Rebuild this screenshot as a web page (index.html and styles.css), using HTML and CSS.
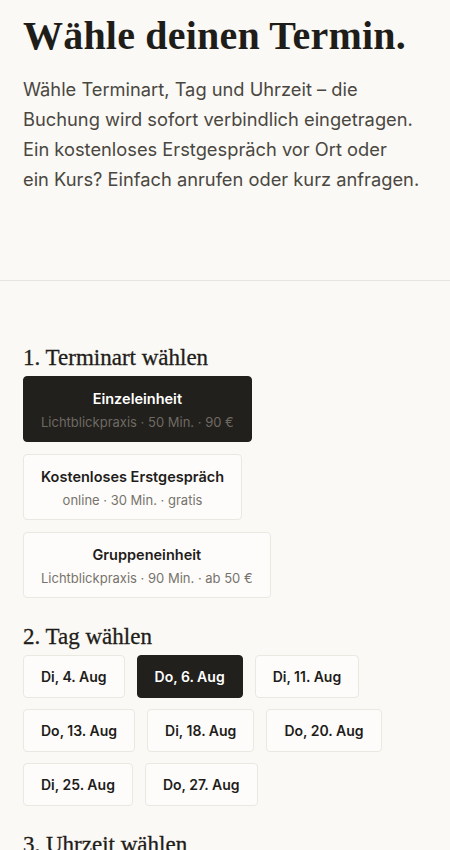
FILE: index.html
```html
<!DOCTYPE html>
<html lang="de">
<head>
<meta charset="utf-8">
<link rel="stylesheet" href="styles.css">
</head>
<body>
<header class="intro">
  <h1 class="title">Wähle deinen Termin.</h1>
  <p class="lead">Wähle Terminart, Tag und Uhrzeit – die<br>Buchung wird sofort verbindlich eingetragen.<br>Ein kostenloses Erstgespräch vor Ort oder<br>ein Kurs? Einfach anrufen oder kurz anfragen.</p>
</header>
<main class="booking">
  <section class="step">
    <h2 class="step-title">1. Terminart wählen</h2>
    <div class="types">
      <button class="type active"><span class="type-name">Einzeleinheit</span><span class="type-meta">Lichtblickpraxis · 50 Min. · 90 €</span></button>
      <button class="type"><span class="type-name">Kostenloses Erstgespräch</span><span class="type-meta">online · 30 Min. · gratis</span></button>
      <button class="type"><span class="type-name">Gruppeneinheit</span><span class="type-meta">Lichtblickpraxis · 90 Min. · ab 50 €</span></button>
    </div>
  </section>
  <section class="step">
    <h2 class="step-title">2. Tag wählen</h2>
    <div class="days">
      <button class="day">Di, 4. Aug</button>
      <button class="day active">Do, 6. Aug</button>
      <button class="day">Di, 11. Aug</button>
      <button class="day">Do, 13. Aug</button>
      <button class="day">Di, 18. Aug</button>
      <button class="day">Do, 20. Aug</button>
      <button class="day">Di, 25. Aug</button>
      <button class="day">Do, 27. Aug</button>
    </div>
  </section>
  <section class="step">
    <h2 class="step-title">3. Uhrzeit wählen</h2>
  </section>
</main>
</body>
</html>
```
FILE: styles.css
```css
html, body {
  margin: 0;
  padding: 0;
  background: #faf9f5;
  color: #1f1d1a;
}
body {
  font-family: Inter, "Noto Sans", sans-serif;
}
.intro {
  padding: 14px 23px 86px;
  border-bottom: 1px solid #e6e4df;
}
.title {
  margin: 0;
  font-family: "Liberation Serif", serif;
  font-weight: 700;
  font-size: 40px;
  line-height: 44px;
  letter-spacing: 0.2px;
  color: #1f1d1a;
}
.lead {
  margin: 16px 0 0;
  font-size: 18.3px;
  line-height: 30px;
  color: #4a4741;
  white-space: nowrap;
}
.booking {
  padding: 64px 23px 0;
}
.step {
  margin-bottom: 26px;
}
.step-title {
  margin: 0 0 5px;
  font-family: "Liberation Serif", serif;
  font-weight: 400;
  font-size: 23px;
  line-height: 26px;
  color: #1f1d1a;
  -webkit-text-stroke: 0.3px #1f1d1a;
}
.types {
  display: flex;
  flex-direction: column;
  align-items: flex-start;
  gap: 12px;
}
.type {
  display: flex;
  flex-direction: column;
  align-items: center;
  gap: 4px;
  padding: 12px 17px 10px;
  background: #fdfcfa;
  border: 1px solid #ebe8e2;
  border-radius: 4px;
  font-family: inherit;
  cursor: pointer;
}
.type-name {
  font-size: 14.5px;
  font-weight: 600;
  line-height: 20px;
  color: #1f1d1a;
}
.type-meta {
  font-size: 13px;
  line-height: 18px;
  color: #77736c;
}
.type.active {
  background: #22201c;
  border-color: #22201c;
}
.type.active .type-name {
  color: #ffffff;
}
.type.active .type-meta {
  color: #6e6a63;
}
.days {
  display: flex;
  flex-wrap: wrap;
  gap: 11px 12px;
}
.day {
  height: 43px;
  padding: 0 17px;
  background: #fdfcfa;
  border: 1px solid #ebe8e2;
  border-radius: 4px;
  font-family: inherit;
  font-size: 14px;
  font-weight: 600;
  color: #1f1d1a;
  cursor: pointer;
}
.day.active {
  background: #22201c;
  border-color: #22201c;
  color: #ffffff;
}
```
